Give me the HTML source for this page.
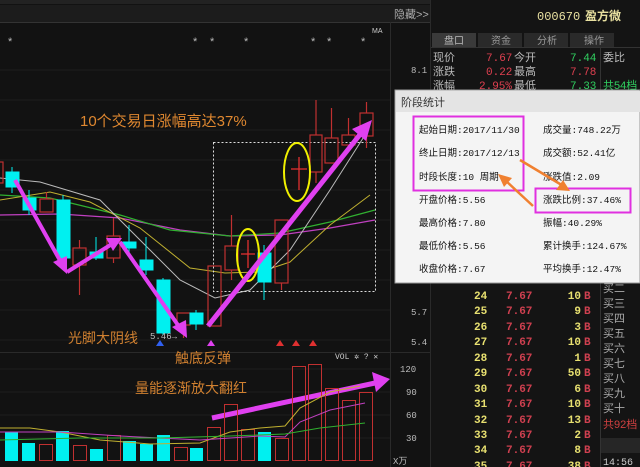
<!DOCTYPE html>
<html><head><meta charset="utf-8"><style>
html,body{margin:0;padding:0;background:#111;width:640px;height:467px;overflow:hidden}
svg{display:block}
text{font-family:"Liberation Sans","Noto Sans CJK SC",sans-serif}
text.m,.m text{font-family:"Liberation Mono","Noto Sans CJK SC",monospace}
</style></head><body>
<svg width="640" height="467" viewBox="0 0 640 467" xmlns="http://www.w3.org/2000/svg">
<rect width="640" height="467" fill="#121212"/>
<rect x="0" y="0" width="640" height="4" fill="#222"/>
<rect x="0" y="5" width="430" height="17" fill="#1c1c1c"/>
<line x1="0" y1="22.5" x2="430" y2="22.5" stroke="#333"/>
<text x="394" y="18" font-size="11" fill="#aaa">隐藏&gt;&gt;</text>
<line x1="390.5" y1="22" x2="390.5" y2="467" stroke="#2a2a2a"/>
<line x1="430.5" y1="0" x2="430.5" y2="467" stroke="#2a2a2a"/>
<line x1="0" y1="352.5" x2="430" y2="352.5" stroke="#2a2a2a"/>
<g stroke="#1e1e1e">
<line x1="0" y1="70" x2="390" y2="70"/><line x1="0" y1="100" x2="390" y2="100"/>
<line x1="0" y1="130" x2="390" y2="130"/><line x1="0" y1="160" x2="390" y2="160"/>
<line x1="0" y1="190" x2="390" y2="190"/><line x1="0" y1="220" x2="390" y2="220"/>
<line x1="0" y1="250" x2="390" y2="250"/><line x1="0" y1="280" x2="390" y2="280"/>
<line x1="0" y1="310" x2="390" y2="310"/><line x1="0" y1="340" x2="390" y2="340"/>
<line x1="0" y1="369" x2="390" y2="369"/><line x1="0" y1="392" x2="390" y2="392"/>
<line x1="0" y1="415" x2="390" y2="415"/><line x1="0" y1="438" x2="390" y2="438"/>
</g>
<g font-size="9" fill="#bbb" class="m">
<text x="411" y="73">8.1</text>
<text x="411" y="315">5.7</text>
<text x="411" y="345">5.4</text>
<text x="400" y="372">120</text>
<text x="406" y="395">90</text>
<text x="406" y="418">60</text>
<text x="406" y="441">30</text>
<text x="393" y="464">X万</text>
</g>
<text x="372" y="33" font-size="7" fill="#ccc">MA</text>
<g font-size="11" fill="#bbb">
<text x="8" y="45">*</text><text x="193" y="45">*</text><text x="210" y="45">*</text><text x="244" y="45">*</text>
<text x="311" y="45">*</text><text x="327" y="45">*</text><text x="361" y="45">*</text>
</g>
<polyline fill="none" stroke="#c040c0" stroke-width="1.2" points="0,215 60,214 120,218 180,230 230,236 280,235 330,228 375,220"/>
<polyline fill="none" stroke="#30b030" stroke-width="1.2" points="0,195 50,198 120,215 170,230 230,236 280,233 330,222 375,210"/>
<polyline fill="none" stroke="#c0b030" stroke-width="1" points="0,200 50,192 90,202 140,228 190,268 225,273 260,272 290,262 330,225 370,195"/>
<polyline fill="none" stroke="#bbb" stroke-width="1" points="0,178 40,182 100,200 140,240 180,280 215,298 250,290 290,250 330,190 365,135"/>
<rect x="213.5" y="142.5" width="162" height="149" fill="none" stroke="#ddd" stroke-dasharray="2,2"/>
<g fill="none" stroke="#c03030" stroke-width="1.2">
<rect x="-3" y="162" width="6" height="21"/>
<rect x="40" y="199" width="13" height="13"/><line x1="46.5" y1="192" x2="46.5" y2="199"/>
<rect x="73" y="248" width="13" height="17"/><line x1="79.5" y1="240" x2="79.5" y2="248"/><line x1="79.5" y1="265" x2="79.5" y2="295"/>
<rect x="107" y="236" width="13" height="22"/><line x1="113.5" y1="218" x2="113.5" y2="236"/><line x1="113.5" y1="258" x2="113.5" y2="263"/>
<rect x="177" y="313" width="13" height="12"/><line x1="183.5" y1="325" x2="183.5" y2="338"/>
<rect x="208" y="266" width="13" height="60"/>
<rect x="225" y="246" width="13" height="24"/><line x1="231.5" y1="215" x2="231.5" y2="246"/><line x1="231.5" y1="270" x2="231.5" y2="280"/>
<rect x="275" y="220" width="13" height="63"/><line x1="281.5" y1="283" x2="281.5" y2="290"/>
<rect x="310" y="135" width="12" height="37"/><line x1="316" y1="100" x2="316" y2="135"/><line x1="316" y1="172" x2="316" y2="183"/>
<rect x="325" y="138" width="13" height="25"/><line x1="331.5" y1="108" x2="331.5" y2="138"/>
<rect x="342" y="135" width="13" height="10"/><line x1="348.5" y1="118" x2="348.5" y2="135"/>
<rect x="360" y="113" width="13" height="23"/><line x1="366.5" y1="102" x2="366.5" y2="113"/><line x1="366.5" y1="136" x2="366.5" y2="148"/>
</g>
<g stroke="#e03030" stroke-width="1.3">
<line x1="299" y1="157" x2="299" y2="190"/><line x1="291" y1="169" x2="307" y2="169"/>
<line x1="248" y1="240" x2="248" y2="268"/><line x1="241" y1="254" x2="255" y2="254"/>
</g>
<g fill="#00f0f0" stroke="#00f0f0">
<line x1="12" y1="167" x2="12" y2="193"/><rect x="6" y="172" width="13" height="15"/>
<line x1="29" y1="190" x2="29" y2="215"/><rect x="23" y="198" width="13" height="12"/>
<line x1="63" y1="195" x2="63" y2="260"/><rect x="57" y="200" width="13" height="58"/>
<line x1="96" y1="237" x2="96" y2="260"/><rect x="90" y="252" width="13" height="6"/>
<line x1="129" y1="225" x2="129" y2="255"/><rect x="123" y="242" width="13" height="6"/>
<line x1="146" y1="237" x2="146" y2="275"/><rect x="140" y="260" width="13" height="10"/>
<line x1="163" y1="278" x2="163" y2="335"/><rect x="157" y="280" width="13" height="53"/>
<line x1="196" y1="310" x2="196" y2="330"/><rect x="190" y="313" width="13" height="11"/>
<line x1="264" y1="245" x2="264" y2="300"/><rect x="258" y="253" width="13" height="29"/>
</g>
<ellipse cx="297" cy="172" rx="13" ry="29" fill="none" stroke="#f0f000" stroke-width="2"/>
<ellipse cx="248" cy="255" rx="11" ry="26" fill="none" stroke="#f0f000" stroke-width="2"/>
<g fill="#e040f0" stroke="#e040f0">
<line x1="15" y1="180" x2="62" y2="264" stroke-width="4"/><polygon points="67,274 53,262 67,256" stroke="none"/>
<line x1="67" y1="272" x2="112" y2="244" stroke-width="4"/><polygon points="122,238 106,238 113,251" stroke="none"/>
<line x1="120" y1="242" x2="180" y2="328" stroke-width="4"/><polygon points="187,338 172,327 186,320" stroke="none"/>
<line x1="208" y1="326" x2="362" y2="132" stroke-width="5"/><polygon points="372,120 352,129 366,141" stroke="none"/>
<line x1="212" y1="418" x2="375" y2="383" stroke-width="5"/><polygon points="390,379 372,372 376,392" stroke="none"/>
</g>
<text x="80" y="126" font-size="15" fill="#e08830">10个交易日涨幅高达37%</text>
<text x="68" y="343" font-size="14" fill="#d08030">光脚大阴线</text>
<text x="150" y="339" font-size="9" fill="#bbb" class="m">5.46→</text>
<text x="175" y="363" font-size="14" fill="#d08030">触底反弹</text>
<text x="135" y="393" font-size="14" fill="#d08030">量能逐渐放大翻红</text>
<polygon points="160,340 164,346 156,346" fill="#3060f0"/>
<polygon points="211,340 215,346 207,346" fill="#e040f0"/>
<polygon points="280,340 284,346 276,346" fill="#e03030"/><polygon points="296,340 300,346 292,346" fill="#e03030"/><polygon points="313,340 317,346 309,346" fill="#e03030"/>
<text x="335" y="359" font-size="8" fill="#ccc" class="m">VOL ✲ ? ✕</text>
<g fill="#00f0f0">
<rect x="5" y="432" width="13" height="29"/><rect x="22" y="443" width="13" height="18"/>
<rect x="56" y="431" width="13" height="30"/><rect x="90" y="449" width="13" height="12"/>
<rect x="123" y="441" width="13" height="20"/><rect x="140" y="444" width="13" height="17"/>
<rect x="157" y="435" width="13" height="26"/><rect x="190" y="448" width="13" height="13"/>
<rect x="258" y="432" width="13" height="29"/>
</g>
<g fill="none" stroke="#c03030">
<rect x="39.5" y="444.5" width="13" height="16"/><rect x="73.5" y="445.5" width="13" height="15"/>
<rect x="107.5" y="435.5" width="13" height="25"/><rect x="174.5" y="447.5" width="13" height="13"/>
<rect x="207.5" y="427.5" width="13" height="33"/><rect x="224.5" y="404.5" width="13" height="56"/>
<rect x="241.5" y="429.5" width="13" height="31"/><rect x="275.5" y="438.5" width="13" height="22"/>
<rect x="292.5" y="366.5" width="13" height="94"/><rect x="308.5" y="364.5" width="13" height="96"/>
<rect x="325.5" y="388.5" width="13" height="72"/><rect x="342.5" y="400.5" width="13" height="60"/>
<rect x="359.5" y="392.5" width="13" height="68"/>
</g>
<polyline fill="none" stroke="#c0b030" points="0,428 30,428 60,432 100,440 150,444 200,443 230,432 260,428 285,426 300,408 330,392 360,386"/>
<polyline fill="none" stroke="#c040c0" points="0,432 60,432 120,436 200,440 260,436 285,437 300,422 330,410 365,403"/>
<polyline fill="none" stroke="#30b030" points="0,440 80,438 160,438 230,436 285,434 320,428 365,423"/>
<rect x="431" y="0" width="209" height="467" fill="#141414"/>
<text x="537" y="20" font-size="12" fill="#e8e0a0" class="m">000670</text>
<text x="585" y="20" font-size="12" fill="#e8e0a0" font-weight="bold">盈方微</text>
<g font-size="10" fill="#bbb">
<rect x="432" y="33" width="44" height="14" fill="#3a3a3a"/><text x="444" y="44">盘口</text>
<rect x="478" y="33" width="44" height="14" fill="#2a2a2a"/><text x="491" y="44" fill="#999">资金</text>
<rect x="524" y="33" width="44" height="14" fill="#2a2a2a"/><text x="537" y="44" fill="#999">分析</text>
<rect x="570" y="33" width="44" height="14" fill="#2a2a2a"/><text x="584" y="44" fill="#999">操作</text>
</g>
<line x1="431" y1="47.5" x2="640" y2="47.5" stroke="#333"/>
<g font-size="11">
<text x="433" y="61" fill="#bbb">现价</text><text x="486" y="61" fill="#e04050" class="m">7.67</text><text x="514" y="61" fill="#bbb">今开</text><text x="570" y="61" fill="#30d060" class="m">7.44</text><text x="603" y="61" fill="#bbb">委比</text>
<text x="433" y="75" fill="#bbb">涨跌</text><text x="486" y="75" fill="#e04050" class="m">0.22</text><text x="514" y="75" fill="#bbb">最高</text><text x="570" y="75" fill="#e04050" class="m">7.78</text>
<text x="433" y="89" fill="#bbb">涨幅</text><text x="479" y="89" fill="#e04050" class="m">2.95%</text><text x="514" y="89" fill="#bbb">最低</text><text x="570" y="89" fill="#30d060" class="m">7.33</text><text x="603" y="89" fill="#30d060">共54档</text>
</g>
<line x1="600.5" y1="48" x2="600.5" y2="467" stroke="#333"/>
<g font-size="11" font-weight="bold" class="m">
<g fill="#e8e070">
<text x="474" y="299">24</text><text x="474" y="314">25</text><text x="474" y="330">26</text><text x="474" y="345">27</text><text x="474" y="361">28</text><text x="474" y="376">29</text><text x="474" y="392">30</text><text x="474" y="407">31</text><text x="474" y="423">32</text><text x="474" y="438">33</text><text x="474" y="453">34</text><text x="474" y="469">35</text>
</g>
<g fill="#d04050">
<text x="506" y="299">7.67</text><text x="506" y="314">7.67</text><text x="506" y="330">7.67</text><text x="506" y="345">7.67</text><text x="506" y="361">7.67</text><text x="506" y="376">7.67</text><text x="506" y="392">7.67</text><text x="506" y="407">7.67</text><text x="506" y="423">7.67</text><text x="506" y="438">7.67</text><text x="506" y="453">7.67</text><text x="506" y="469">7.67</text>
<text x="584" y="299">B</text><text x="584" y="314">B</text><text x="584" y="330">B</text><text x="584" y="345">B</text><text x="584" y="361">B</text><text x="584" y="376">B</text><text x="584" y="392">B</text><text x="584" y="407">B</text><text x="584" y="423">B</text><text x="584" y="438">B</text><text x="584" y="453">B</text><text x="584" y="469">B</text>
</g>
<g fill="#e8e070" text-anchor="end">
<text x="581" y="299">10</text><text x="581" y="314">9</text><text x="581" y="330">3</text><text x="581" y="345">10</text><text x="581" y="361">1</text><text x="581" y="376">50</text><text x="581" y="392">6</text><text x="581" y="407">10</text><text x="581" y="423">13</text><text x="581" y="438">2</text><text x="581" y="453">8</text><text x="581" y="469">38</text>
</g>
</g>
<g font-size="11" fill="#aaa">
<text x="603" y="292">买二</text><text x="603" y="307">买三</text><text x="603" y="322">买四</text><text x="603" y="337">买五</text><text x="603" y="352">买六</text><text x="603" y="367">买七</text><text x="603" y="382">买八</text><text x="603" y="397">买九</text><text x="603" y="412">买十</text>
<text x="603" y="428" fill="#d04040">共92档</text>
</g>
<rect x="601" y="438" width="39" height="15" fill="#262626"/>
<text x="603" y="465" font-size="10" fill="#ccc" class="m">14:56</text>
<rect x="395" y="90" width="245" height="193" fill="#f4f4f4" stroke="#999"/>
<rect x="396" y="91" width="244" height="21" fill="#e4e4e4"/>
<text x="401" y="106" font-size="11" fill="#333">阶段统计</text>
<g font-size="9.5" fill="#111" class="m">
<text x="419" y="133">起始日期:2017/11/30</text>
<text x="419" y="156">终止日期:2017/12/13</text>
<text x="419" y="180">时段长度:10 周期</text>
<text x="419" y="203">开盘价格:5.56</text>
<text x="419" y="226">最高价格:7.80</text>
<text x="419" y="249">最低价格:5.56</text>
<text x="419" y="272">收盘价格:7.67</text>
<text x="543" y="133">成交量:748.22万</text>
<text x="543" y="156">成交额:52.41亿</text>
<text x="543" y="180">涨跌值:2.09</text>
<text x="543" y="203">涨跌比例:37.46%</text>
<text x="543" y="226">振幅:40.29%</text>
<text x="543" y="249">累计换手:124.67%</text>
<text x="543" y="272">平均换手:12.47%</text>
</g>
<rect x="413.5" y="116.5" width="110" height="74" fill="none" stroke="#e030e0" stroke-width="2"/>
<rect x="535.5" y="188.5" width="95" height="24" fill="none" stroke="#e030e0" stroke-width="2"/>
<g stroke="#f08030" fill="#f08030">
<line x1="520" y1="160" x2="565" y2="187" stroke-width="2.5"/><polygon points="570,191 556,190 563,180" stroke="none"/>
<line x1="533" y1="206" x2="505" y2="180" stroke-width="2.5"/><polygon points="498,174 512,178 504,187" stroke="none"/>
</g>
</svg>
</body></html>
